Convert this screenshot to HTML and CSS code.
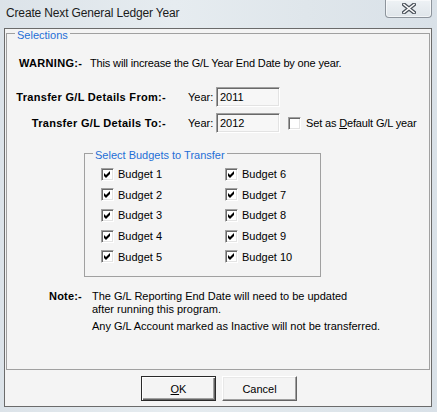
FILE: index.html
```html
<!DOCTYPE html>
<html lang="en">
<head>
    <meta charset="UTF-8">
    <meta name="viewport" content="width=device-width, initial-scale=1.0">
    <title>Create Next General Ledger Year</title>
    <link rel="stylesheet" href="styles.css">
</head>
<body>
    <div class="window">
        <div class="titlebar">
            <span class="title">Create Next General Ledger Year</span>
            <div class="close">
                <svg width="14" height="11" viewBox="0 0 14 11">
                    <path d="M2 1.5 L12 9.5 M12 1.5 L2 9.5" stroke="#4b525b" stroke-width="4" stroke-linecap="square"/>
                    <path d="M2 1.5 L12 9.5 M12 1.5 L2 9.5" stroke="#ffffff" stroke-width="1.6" stroke-linecap="square"/>
                </svg>
            </div>
        </div>

        <div class="client">
            <div class="group selections">
                <span class="group-title">Selections</span>

                <div class="row warning">
                    <span class="bold warning-label">WARNING:-</span>
                    <span class="tight">This will increase the G/L Year End Date by one year.</span>
                </div>

                <div class="row year-row from">
                    <span class="bold year-label">Transfer G/L Details From:-</span>
                    <span class="year-caption">Year:</span>
                    <div class="field">2011</div>
                </div>

                <div class="row year-row to">
                    <span class="bold year-label">Transfer G/L Details To:-</span>
                    <span class="year-caption">Year:</span>
                    <div class="field">2012</div>
                    <label class="check default-check">
                        <span class="box"></span>
                        <span class="tight">Set as <u>D</u>efault G/L year</span>
                    </label>
                </div>

                <div class="group budgets">
                    <span class="group-title">Select Budgets to Transfer</span>
                    <div class="budget-grid">
                        <label class="check"><span class="box checked"></span><span>Budget 1</span></label>
                        <label class="check"><span class="box checked"></span><span>Budget 2</span></label>
                        <label class="check"><span class="box checked"></span><span>Budget 3</span></label>
                        <label class="check"><span class="box checked"></span><span>Budget 4</span></label>
                        <label class="check"><span class="box checked"></span><span>Budget 5</span></label>
                        <label class="check"><span class="box checked"></span><span>Budget 6</span></label>
                        <label class="check"><span class="box checked"></span><span>Budget 7</span></label>
                        <label class="check"><span class="box checked"></span><span>Budget 8</span></label>
                        <label class="check"><span class="box checked"></span><span>Budget 9</span></label>
                        <label class="check"><span class="box checked"></span><span>Budget 10</span></label>
                    </div>
                </div>

                <div class="row note">
                    <span class="bold note-label">Note:-</span>
                    <div class="note-text">
                        <p>The G/L Reporting End Date will need to be updated<br>after running this program.</p>
                        <p>Any G/L Account marked as Inactive will not be transferred.</p>
                    </div>
                </div>
            </div>

            <div class="buttons">
                <button class="btn default"><u>O</u>K</button>
                <button class="btn">Cancel</button>
            </div>
        </div>
    </div>
</body>
</html>
```

FILE: styles.css
```css
body {
    margin: 0;
    font-family: "Liberation Sans", Arial, sans-serif;
    font-size: 11px;
    color: #000;
    background: #dde4ea;
}

.window {
    width: 437px;
    height: 412px;
    background: linear-gradient(90deg, #dce3e9 0%, #e6ecf0 40%, #dfe6eb 70%, #d9e1e8 100%);
    overflow: hidden;
}

.titlebar {
    height: 28px;
    display: flex;
    align-items: flex-start;
}

.title {
    font-size: 12px;
    letter-spacing: -0.15px;
    color: #1b1b1b;
    padding: 6px 0 0 6px;
    line-height: 15px;
}

.close {
    margin-left: auto;
    margin-right: 5px;
    width: 47px;
    height: 18px;
    box-sizing: border-box;
    border: 1px solid #8d949c;
    border-top: none;
    border-radius: 0 0 4px 4px;
    background: linear-gradient(#eef2f5, #dfe5ea);
    box-shadow: inset 0 0 0 1px rgba(255, 255, 255, 0.6);
    display: flex;
    justify-content: center;
    align-items: center;
}

.client {
    margin-left: 4px;
    width: 428px;
    height: 379px;
    box-sizing: border-box;
    border: 1px solid #6b6b6b;
    background: #f4f4f4;
    padding-top: 4px;
}

.group {
    position: relative;
    box-sizing: border-box;
    border: 1px solid #a0a0a0;
}

.group-title {
    position: absolute;
    top: -5px;
    left: 8px;
    padding: 0 2px;
    line-height: 13px;
    color: #1f6fd6;
    background: #f4f4f4;
}

.selections {
    margin-left: 1px;
    width: 424px;
    height: 337px;
}

.bold {
    font-weight: bold;
    letter-spacing: 0.3px;
}

.tight {
    letter-spacing: -0.15px;
}

.row {
    display: flex;
    align-items: center;
    line-height: 13px;
}

.warning {
    margin-top: 19px;
    height: 20px;
    padding-left: 12px;
}

.warning-label {
    width: 71px;
    flex-shrink: 0;
}

.year-row {
    height: 20px;
}

.from {
    margin-top: 14px;
}

.to {
    margin-top: 6px;
}

.year-label {
    width: 159px;
    text-align: right;
    flex-shrink: 0;
}

.year-caption {
    margin-left: 22px;
    width: 28px;
}

.field {
    width: 64px;
    height: 20px;
    box-sizing: border-box;
    border: 1px solid;
    border-color: #a0a0a0 #ffffff #ffffff #a0a0a0;
    box-shadow: inset 1px 1px #696969, inset -1px -1px #e3e3e3;
    background: #f7f7f7;
    padding: 3px 0 0 3px;
    line-height: 13px;
}

.check {
    display: flex;
    align-items: center;
    gap: 4px;
}

.box {
    width: 13px;
    height: 13px;
    box-sizing: border-box;
    border: 1px solid;
    border-color: #a0a0a0 #ffffff #ffffff #a0a0a0;
    box-shadow: inset 1px 1px #696969, inset -1px -1px #e3e3e3;
    background: #fff;
    flex-shrink: 0;
}

.box.checked {
    background: #fff url("data:image/svg+xml,%3Csvg xmlns='http://www.w3.org/2000/svg' width='11' height='11' viewBox='0 0 11 11'%3E%3Cpolygon points='2,4 4,6 8,2 8,5 4,9 2,7' fill='%23000'/%3E%3C/svg%3E") no-repeat 0 0;
}

.default-check {
    margin-left: 8px;
    gap: 5px;
}

.budgets {
    margin-top: 20px;
    margin-left: 77px;
    width: 237px;
    height: 124px;
}

.budget-grid {
    display: grid;
    grid-template-columns: 124px 90px;
    grid-template-rows: repeat(5, 20.6px);
    grid-auto-flow: column;
    padding: 10px 0 0 16px;
    align-items: center;
}

.note {
    margin-top: 13px;
    margin-left: 42px;
    align-items: flex-start;
    line-height: 13.4px;
}

.note-label {
    width: 43px;
    flex-shrink: 0;
    letter-spacing: 0.2px;
}

.note-text p {
    margin: 0;
}

.note-text p + p {
    margin-top: 3px;
}

.buttons {
    display: flex;
    justify-content: center;
    gap: 6px;
    margin-top: 6px;
    padding-left: 2px;
}

.btn {
    width: 75px;
    height: 25px;
    box-sizing: border-box;
    font-family: "Liberation Sans", Arial, sans-serif;
    font-size: 11px;
    color: #000;
    background: #f4f4f4;
    border: 1px solid;
    border-color: #ffffff #646464 #646464 #ffffff;
    box-shadow: inset -1px -1px #a0a0a0, inset 1px 1px #e8e8e8;
    padding: 0;
}

.btn.default {
    border-color: #2a2a2a;
    box-shadow: inset 1px 1px #ffffff, inset -1px -1px #646464, inset -2px -2px #a0a0a0;
}
```
